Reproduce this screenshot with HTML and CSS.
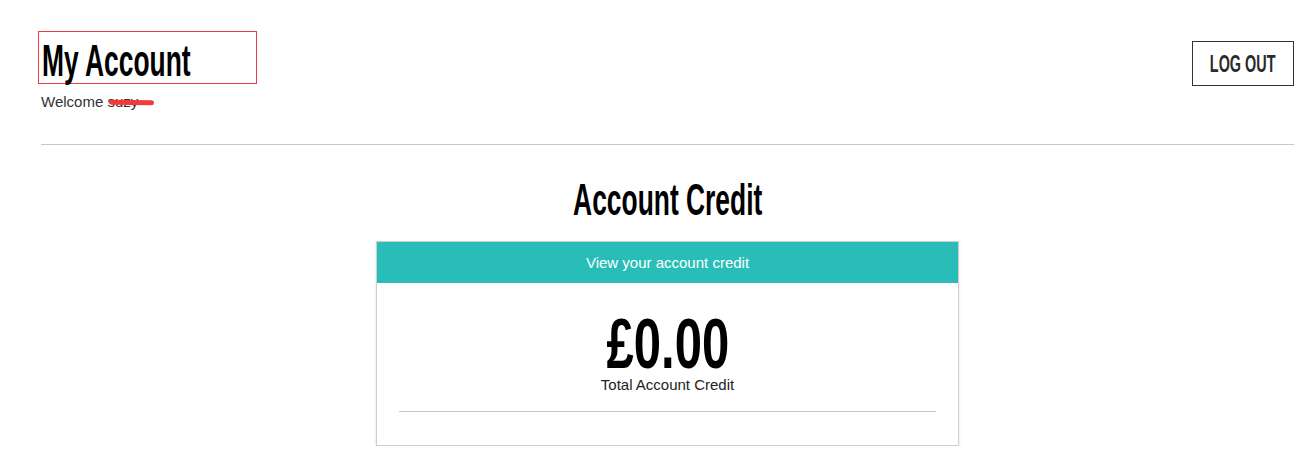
FILE: index.html
```html
<!DOCTYPE html>
<html lang="en">
<head>
<meta charset="utf-8">
<title>My Account</title>
<link rel="stylesheet" href="styles.css">
</head>
<body>
<div class="page">
  <header class="header">
    <div class="intro">
      <div class="title-box"><h1 class="title"><span class="cond">My Account</span></h1></div>
      <p class="welcome">Welcome <span class="name">suzy<span class="scribble"></span></span></p>
    </div>
    <a class="logout" href="#"><span class="cond cond-btn">LOG OUT</span></a>
  </header>
  <hr class="rule">
  <main class="credit">
    <h2 class="section-title"><span class="cond cond-center">Account Credit</span></h2>
    <section class="card">
      <div class="card-head">View your account credit</div>
      <div class="card-body">
        <div class="amount"><span class="cond cond-amount">£0.00</span></div>
        <div class="amount-label">Total Account Credit</div>
        <hr class="card-rule">
      </div>
    </section>
  </main>
</div>
</body>
</html>
```
FILE: styles.css
```css
* { box-sizing: border-box; }
body {
  margin: 0;
  background: #fff;
  font-family: "Liberation Sans", Arial, sans-serif;
  color: #333;
}
.page {
  padding: 0 10px 0 41px;
}
.cond {
  display: inline-block;
  font-family: "Liberation Sans", Arial, sans-serif;
  font-weight: bold;
  transform: scaleX(0.6);
  transform-origin: left center;
  white-space: nowrap;
  color: #000;
}
.cond-center { transform-origin: center center; }
.header {
  display: flex;
  justify-content: space-between;
  align-items: flex-start;
  padding-top: 31px;
}
.title-box {
  width: 219px;
  height: 53px;
  margin-left: -3px;
  border: 1px solid #f03c3c;
  padding: 0 0 0 3px;
}
.title {
  margin: 0;
  font-size: 44px;
  line-height: 58px;
  height: 51px;
}
.welcome {
  margin: 9px 0 0;
  font-size: 15px;
  line-height: 18px;
}
.name { position: relative; }
.scribble {
  position: absolute;
  left: 2px;
  top: 7px;
  width: 45px;
  height: 5px;
  border-radius: 3px;
  background: #f23a3a;
  transform: rotate(1deg);
}
.logout {
  margin-top: 10px;
  width: 102px;
  height: 45px;
  border: 1px solid #333;
  display: flex;
  align-items: center;
  justify-content: center;
  text-decoration: none;
}
.cond-btn {
  font-size: 24px;
  color: #2a2a2a;
  transform-origin: center center;
  transform: scaleX(0.6);
}
.rule {
  margin: 33px 0 0;
  border: 0;
  border-top: 1px solid #c8c8c8;
}
.credit {
  display: flex;
  flex-direction: column;
  align-items: center;
}
.section-title {
  margin: 0;
  padding-top: 27px;
  font-size: 44px;
  line-height: 56px;
  height: 96px;
}
.card {
  width: 583px;
  height: 205px;
  border: 1px solid #cfcfcf;
  box-shadow: 0 1px 3px rgba(0,0,0,0.12);
  background: #fff;
}
.card-head {
  height: 41px;
  background: #29bdb7;
  color: #fff;
  font-size: 15px;
  line-height: 41px;
  text-align: center;
}
.card-body {
  padding: 29px 22px 0;
  text-align: center;
}
.amount {
  font-size: 71px;
  line-height: 64px;
  height: 64px;
}
.cond-amount {
  transform-origin: center center;
  transform: scaleX(0.69);
}
.amount-label {
  font-size: 15px;
  line-height: 18px;
  color: #222;
  margin-top: 0;
}
.card-rule {
  margin: 17px 0 0;
  border: 0;
  border-top: 1px solid #c4c4c4;
}
```
